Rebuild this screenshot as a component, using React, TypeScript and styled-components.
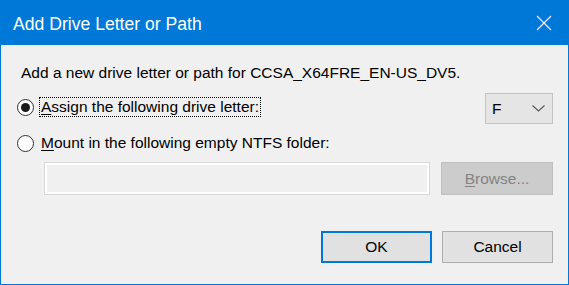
import React from "react";
import styled, { createGlobalStyle, css } from "styled-components";

const Global = createGlobalStyle`
  html, body { margin: 0; padding: 0; background: #f0f0f0; }
  * { box-sizing: border-box; }
`;

const Window = styled.div`
  width: 569px;
  height: 285px;
  border: 1px solid #0078d7;
  background: #f0f0f0;
  display: flex;
  flex-direction: column;
  font-family: "Segoe UI", "Liberation Sans", Arial, sans-serif;
  font-size: 15.5px;
  color: #000;
`;

const TitleBar = styled.div`
  height: 44px;
  background: #0078d7;
  display: flex;
  align-items: center;
  padding-left: 12px;
  padding-top: 2px;
  flex-shrink: 0;
`;

const Title = styled.div`
  flex: 1;
  color: #fff;
  font-size: 17.6px;
  line-height: 22px;
`;

const CloseButton = styled.div`
  width: 48px;
  height: 44px;
  margin-top: -2px;
  display: flex;
  align-items: center;
  justify-content: center;
`;

const Body = styled.div`
  flex: 1;
  display: flex;
  flex-direction: column;
  padding: 18px 15px 0 20px;
`;

const Description = styled.div`
  line-height: 20px;
  height: 20px;
  white-space: nowrap;
`;

const OptionRow = styled.div<{ $mt: number }>`
  display: flex;
  align-items: flex-start;
  justify-content: space-between;
  margin-top: ${(p) => p.$mt}px;
`;

const RadioGroup = styled.label<{ $offset: number }>`
  display: flex;
  align-items: center;
  gap: 5px;
  margin-top: ${(p) => p.$offset}px;
  margin-left: -4px;
`;

const RadioCircle = styled.span<{ $checked?: boolean }>`
  width: 17px;
  height: 17px;
  border-radius: 50%;
  border: 1px solid #333;
  background: #fff;
  display: flex;
  align-items: center;
  justify-content: center;
  &::after {
    content: "";
    width: 9px;
    height: 9px;
    border-radius: 50%;
    background: ${(p) => (p.$checked ? "#1a1a1a" : "transparent")};
  }
`;

const RadioText = styled.span<{ $focused?: boolean }>`
  height: 20px;
  line-height: 18px;
  padding: 0 1px;
  border: 1px dotted ${(p) => (p.$focused ? "#000" : "transparent")};
  white-space: nowrap;
`;

const Mnemonic = styled.u`
  text-decoration-thickness: 1px;
  text-underline-offset: 2px;
`;

const Select = styled.div`
  width: 68px;
  height: 31px;
  background: #e5e5e5;
  border: 1px solid #c4c4c4;
  display: flex;
  align-items: center;
  justify-content: space-between;
  padding: 0 7px 0 6px;
  line-height: 20px;
`;

const PathRow = styled.div`
  display: flex;
  gap: 11px;
  margin-top: 9px;
  padding-left: 23px;
`;

const TextBox = styled.div`
  flex: 1;
  height: 33px;
  background: #f0f0f0;
  border: 1px solid #d9d9d9;
  box-shadow: inset 0 0 0 2px #fff;
`;

const Button = styled.div<{ $variant?: "default" | "disabled" | "normal" }>`
  width: 112px;
  height: 33px;
  display: flex;
  align-items: center;
  justify-content: center;
  line-height: 20px;
  background: #e1e1e1;
  border: 1px solid #adadad;
  ${(p) =>
    p.$variant === "disabled" &&
    css`
      background: #cccccc;
      border-color: #bfbfbf;
      color: #838383;
    `}
  ${(p) =>
    p.$variant === "default" &&
    css`
      border: 2px solid #0078d7;
    `}
`;

const Footer = styled.div`
  display: flex;
  justify-content: flex-end;
  gap: 10px;
  margin-top: 36px;
  & > ${Button} {
    width: 111px;
    height: 32px;
  }
`;

export default function App() {
  return (
    <>
      <Global />
      <Window>
        <TitleBar>
          <Title>Add Drive Letter or Path</Title>
          <CloseButton>
            <svg width="16" height="16" viewBox="0 0 16 16">
              <path d="M1 1 L15 15 M15 1 L1 15" stroke="#fff" strokeWidth="1.1" fill="none" />
            </svg>
          </CloseButton>
        </TitleBar>
        <Body>
          <Description>Add a new drive letter or path for CCSA_X64FRE_EN-US_DV5.</Description>
          <OptionRow $mt={10}>
            <RadioGroup $offset={4}>
              <RadioCircle $checked />
              <RadioText $focused>
                <Mnemonic>A</Mnemonic>ssign the following drive letter:
              </RadioText>
            </RadioGroup>
            <Select>
              <span>F</span>
              <svg width="13" height="7" viewBox="0 0 13 7">
                <path d="M0.5 0.5 L6.5 6 L12.5 0.5" stroke="#555" strokeWidth="1.1" fill="none" />
              </svg>
            </Select>
          </OptionRow>
          <OptionRow $mt={9}>
            <RadioGroup $offset={0}>
              <RadioCircle />
              <RadioText>
                <Mnemonic>M</Mnemonic>ount in the following empty NTFS folder:
              </RadioText>
            </RadioGroup>
          </OptionRow>
          <PathRow>
            <TextBox />
            <Button $variant="disabled">
              <span>
                <Mnemonic>B</Mnemonic>rowse...
              </span>
            </Button>
          </PathRow>
          <Footer>
            <Button $variant="default">OK</Button>
            <Button>Cancel</Button>
          </Footer>
        </Body>
      </Window>
    </>
  );
}
